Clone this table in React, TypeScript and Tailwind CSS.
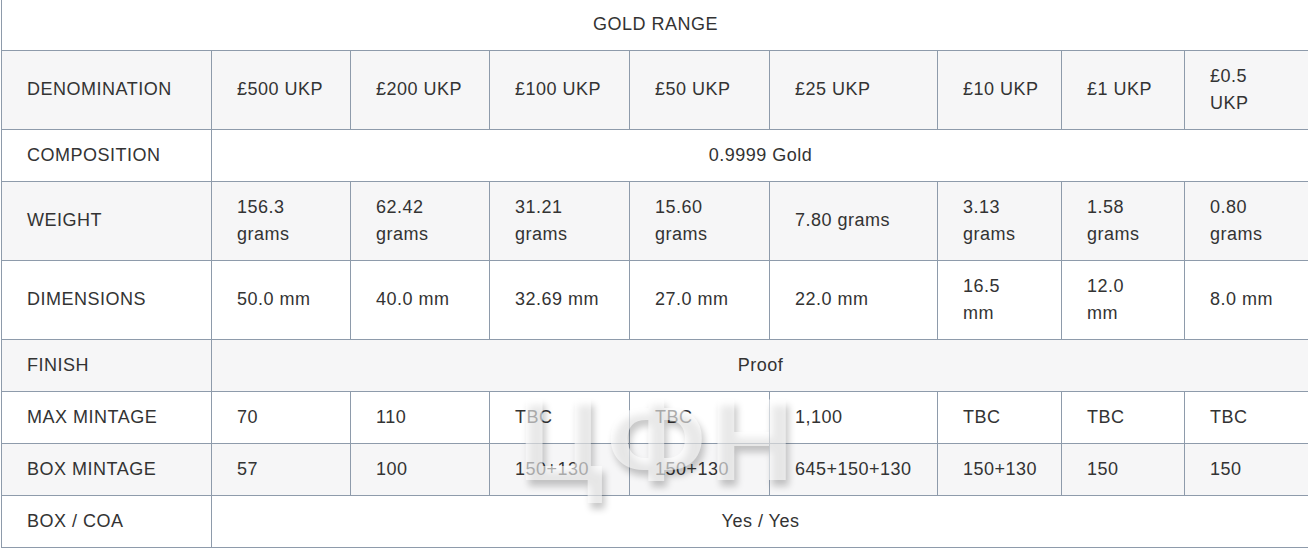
const cols = [
  'w-[210px]',
  'w-[139px]',
  'w-[139px]',
  'w-[140px]',
  'w-[140px]',
  'w-[168px]',
  'w-[124px]',
  'w-[123px]',
  'w-[125px]',
];

const cell =
  'border border-[#8e9bab] px-[25px] py-[12px] align-middle text-left whitespace-pre';

type Row = { label: string; values?: string[]; span?: string; gray: boolean };

// line breaks follow the wrapping seen on the original page
const rows: Row[] = [
  {
    label: 'DENOMINATION',
    values: ['£500 UKP', '£200 UKP', '£100 UKP', '£50 UKP', '£25 UKP', '£10 UKP', '£1 UKP', '£0.5\nUKP'],
    gray: true,
  },
  { label: 'COMPOSITION', span: '0.9999 Gold', gray: false },
  {
    label: 'WEIGHT',
    values: ['156.3\ngrams', '62.42\ngrams', '31.21\ngrams', '15.60\ngrams', '7.80 grams', '3.13\ngrams', '1.58\ngrams', '0.80\ngrams'],
    gray: true,
  },
  {
    label: 'DIMENSIONS',
    values: ['50.0 mm', '40.0 mm', '32.69 mm', '27.0 mm', '22.0 mm', '16.5\nmm', '12.0\nmm', '8.0 mm'],
    gray: false,
  },
  { label: 'FINISH', span: 'Proof', gray: true },
  {
    label: 'MAX MINTAGE',
    values: ['70', '110', 'TBC', 'TBC', '1,100', 'TBC', 'TBC', 'TBC'],
    gray: false,
  },
  {
    label: 'BOX MINTAGE',
    values: ['57', '100', '150+130', '150+130', '645+150+130', '150+130', '150', '150'],
    gray: true,
  },
  { label: 'BOX / COA', span: 'Yes / Yes', gray: false },
];

export default function App() {
  return (
    <div className="relative w-[1308px] h-[548px] overflow-hidden bg-white">
      <table
        className="ml-px w-[1308px] table-fixed border-collapse text-[18px] leading-[27px] text-[#333]"
        style={{ fontFamily: '"Liberation Sans", Arial, sans-serif', letterSpacing: '0.5px' }}
      >
        <colgroup>
          {cols.map((c, i) => (
            <col key={i} className={c} />
          ))}
        </colgroup>
        <tbody>
          {/* title */}
          <tr className="bg-white">
            <td colSpan={9} className="border border-t-0 border-[#8e9bab] h-[50px] p-0 text-center align-middle">
              GOLD RANGE
            </td>
          </tr>
          {rows.map((r) => (
            <tr key={r.label} className={r.gray ? 'bg-[#f6f6f7]' : 'bg-white'}>
              <td className={cell}>{r.label}</td>
              {r.span ? (
                <td colSpan={8} className={cell + ' text-center'}>
                  <span className="block text-center">{r.span}</span>
                </td>
              ) : (
                r.values!.map((v, i) => (
                  <td key={i} className={cell}>
                    {v}
                  </td>
                ))
              )}
            </tr>
          ))}
        </tbody>
      </table>

      {/* watermark */}
      <div
        className="pointer-events-none absolute left-[518px] top-[382px] text-[116px] font-bold leading-none text-white/60 select-none"
        style={{
          fontFamily: '"Liberation Sans", Arial, sans-serif',
          textShadow: '3px 6px 7px rgba(0,0,0,0.22)',
          letterSpacing: '4px',
        }}
      >
        ЦФН
      </div>
    </div>
  );
}
